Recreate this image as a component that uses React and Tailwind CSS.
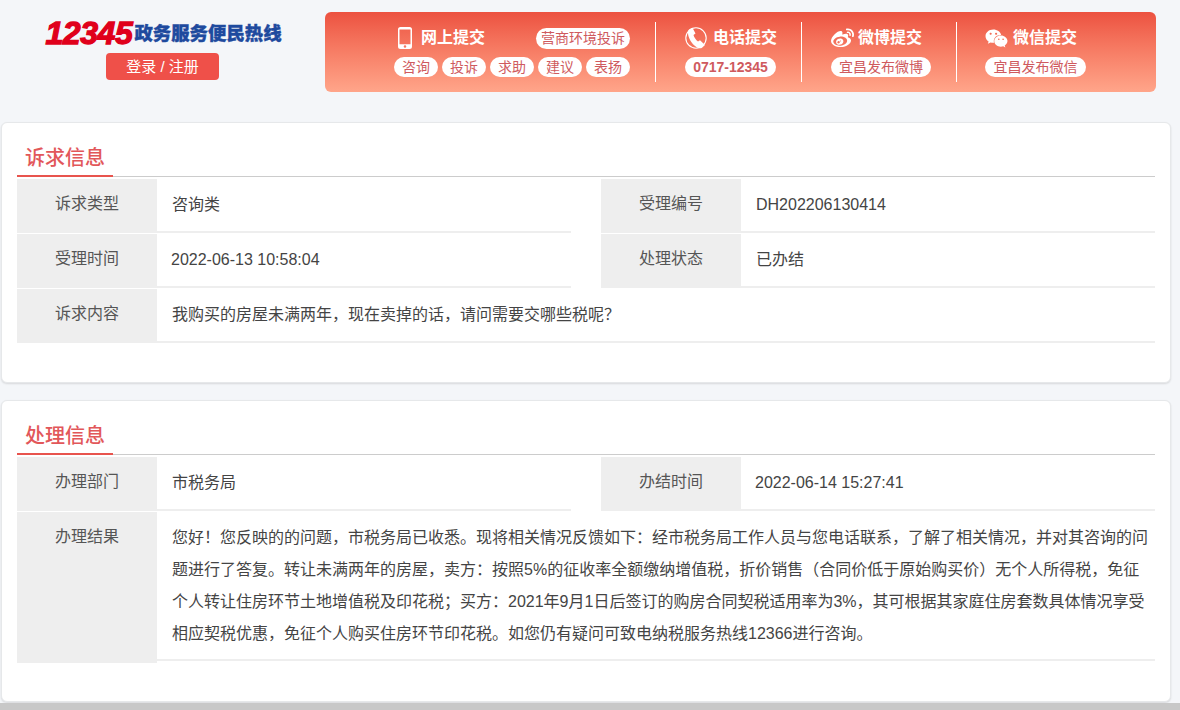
import React from "react";
import { FaWeibo, FaWeixin } from "react-icons/fa";

const font = "font-['Liberation_Sans','Noto_Sans_CJK_SC',sans-serif]";

function MobileIcon() {
  return (
    <svg width="14" height="22" viewBox="0 0 14 22" className="ml-1 shrink-0">
      <path
        fillRule="evenodd"
        fill="#fff"
        d="M2.5 0h9A2.5 2.5 0 0 1 14 2.5v17a2.5 2.5 0 0 1-2.5 2.5h-9A2.5 2.5 0 0 1 0 19.500v-17A2.5 2.5 0 0 1 2.5 0zM1.500 2.500v14.700h11V2.500zM7 18.200a1.300 1.300 0 1 0 0 2.600 1.300 1.300 0 0 0 0-2.600z"
      />
    </svg>
  );
}

function PhoneIcon() {
  return (
    <svg width="22" height="24" viewBox="0 0 22 24" className="shrink-0">
      <circle cx="11" cy="12" r="10.200" fill="none" stroke="#fff" strokeWidth="1.100" />
      <path
        fill="#fff"
        d="M4 3.500 7.500 1.800l3 5.700-2 1.500c.5 2 2.500 5 4.500 6.500l2-1.200 5 4.700-3 2.800c-1.500 1-4 .5-6-1C7 18 3 12 3 7c0-1.500.2-2.700 1-3.500z"
      />
    </svg>
  );
}

function Pill({ children, className = "h-5" }) {
  return (
    <span
      className={`flex items-center justify-center rounded-full bg-white text-[14px] text-[#cf5a5e] ${className}`}
    >
      {children}
    </span>
  );
}

function Head({ icon, children }) {
  return (
    <div className="flex h-[22px] items-center text-[16px] font-bold text-white">
      {icon}
      {children}
    </div>
  );
}

function Header() {
  return (
    <div className="flex h-[122px] shrink-0">
      <div className="flex w-[325px] flex-col items-center pt-[18px]">
        <div className="ml-[2px] flex h-[30px] items-center">
          <span className="font-['Liberation_Sans'] text-[32px] font-bold italic tracking-[-0.4px] text-[#e0001b] [-webkit-text-stroke:1.3px_#e0001b]">
            12345
          </span>
          <span className="ml-[2px] font-['Noto_Sans_CJK_SC'] text-[18.4px] font-black text-[#1e4a9e] [-webkit-text-stroke:0.4px_#1e4a9e]">
            政务服务便民热线
          </span>
        </div>
        <button className="mt-[5px] h-[27px] w-[113px] rounded bg-[#ef5049] pt-px text-[15px] text-white">
          登录 / 注册
        </button>
      </div>
      <div className="mt-3 flex h-20 w-[831px] rounded-md bg-gradient-to-b from-[#ec5140] to-[#ffa58a] py-[10px]">
        <div className="flex w-[331px] flex-col border-r border-white pl-[69px] pt-[5px]">
          <div className="flex items-center justify-between pr-[25px]">
            <Head icon={<MobileIcon />}>
              <span className="ml-[9px]">网上提交</span>
            </Head>
            <Pill className="h-[21px] w-[94px]">营商环境投诉</Pill>
          </div>
          <div className="mt-2 flex gap-1">
            {["咨询", "投诉", "求助", "建议", "表扬"].map((t) => (
              <Pill key={t} className="h-5 w-[44px]">
                {t}
              </Pill>
            ))}
          </div>
        </div>
        <div className="flex w-[146px] flex-col border-r border-white pl-[29px] pt-[5px]">
          <Head icon={<PhoneIcon />}>
            <span className="ml-[6px]">电话提交</span>
          </Head>
          <Pill className="mt-2 h-5 w-[91px] font-bold">0717-12345</Pill>
        </div>
        <div className="flex w-[155px] flex-col border-r border-white pl-[29px] pt-[5px]">
          <Head icon={<FaWeibo size={23} color="#fff" />}>
            <span className="ml-1">微博提交</span>
          </Head>
          <Pill className="mt-2 h-5 w-[100px]">宜昌发布微博</Pill>
        </div>
        <div className="flex flex-col pl-[28px] pt-[5px]">
          <Head icon={<FaWeixin size={23} color="#fff" />}>
            <span className="ml-[5px]">微信提交</span>
          </Head>
          <Pill className="mt-2 h-5 w-[101px]">宜昌发布微信</Pill>
        </div>
      </div>
    </div>
  );
}

function Label({ children, className = "h-[54px]" }) {
  return (
    <div className={`w-[140px] shrink-0 bg-[#eee] text-center text-[16px] leading-[50px] text-[#555] ${className}`}>
      {children}
    </div>
  );
}

function Cell({ label, children }) {
  return (
    <div className="flex h-[55px] w-[554px]">
      <Label>{label}</Label>
      <div className="h-[54px] flex-1 border-b-2 border-[#eee] pl-[15px] text-[16px] leading-[52px] text-[#444]">
        {children}
      </div>
    </div>
  );
}

function Card({ title, className, children }) {
  return (
    <div
      className={`ml-px w-[1170px] shrink-0 rounded-md border border-[#e6e8ea] bg-white px-[15px] pt-[21px] shadow-[0_1px_2px_rgba(0,0,0,0.12)] ${className}`}
    >
      <div className="h-[33px] border-b border-[#ccc]">
        <div className="h-[33px] w-[96px] border-b-2 border-[#e8544e] pl-2 text-[20px] font-medium leading-[28px] text-[#e2575a]">
          {title}
        </div>
      </div>
      <div className="mt-[2px]">{children}</div>
    </div>
  );
}

export default function App() {
  return (
    <div className={`flex h-[710px] flex-col overflow-hidden bg-[#f4f6f9] ${font}`}>
      <Header />
      <Card title="诉求信息" className="h-[261px]">
        <div className="flex justify-between">
          <Cell label="诉求类型">咨询类</Cell>
          <Cell label="受理编号">DH202206130414</Cell>
        </div>
        <div className="flex justify-between">
          <Cell label="受理时间">
            <span className="ml-[-1px]">2022-06-13 10:58:04</span>
          </Cell>
          <Cell label="处理状态">已办结</Cell>
        </div>
        <div className="flex h-[55px]">
          <Label>诉求内容</Label>
          <div className="h-[54px] flex-1 border-b-2 border-[#eee] pl-[15px] text-[16px] leading-[52px] text-[#444]">
            我购买的房屋未满两年，现在卖掉的话，请问需要交哪些税呢？
          </div>
        </div>
      </Card>
      <Card title="处理信息" className="mt-[17px] h-[302px]">
        <div className="flex justify-between">
          <Cell label="办理部门">市税务局</Cell>
          <Cell label="办结时间">
            <span className="ml-[-1px]">2022-06-14 15:27:41</span>
          </Cell>
        </div>
        <div className="flex">
          <Label className="h-[151px]">办理结果</Label>
          <div className="h-[149px] flex-1 border-b-2 border-[#eee] pl-[15px] pr-[5px] pt-[10px] text-[16px] leading-[32px] text-[#444]">
            您好！您反映的的问题，市税务局已收悉。现将相关情况反馈如下：经市税务局工作人员与您电话联系，了解了相关情况，并对其咨询的问题进行了答复。转让未满两年的房屋，卖方：按照5%的征收率全额缴纳增值税，折价销售（合同价低于原始购买价）无个人所得税，免征个人转让住房环节土地增值税及印花税；买方：2021年9月1日后签订的购房合同契税适用率为3%，其可根据其家庭住房套数具体情况享受相应契税优惠，免征个人购买住房环节印花税。如您仍有疑问可致电纳税服务热线12366进行咨询。
          </div>
        </div>
      </Card>
      <div className="mt-px flex-1 bg-[#c8c8c8]" />
    </div>
  );
}
